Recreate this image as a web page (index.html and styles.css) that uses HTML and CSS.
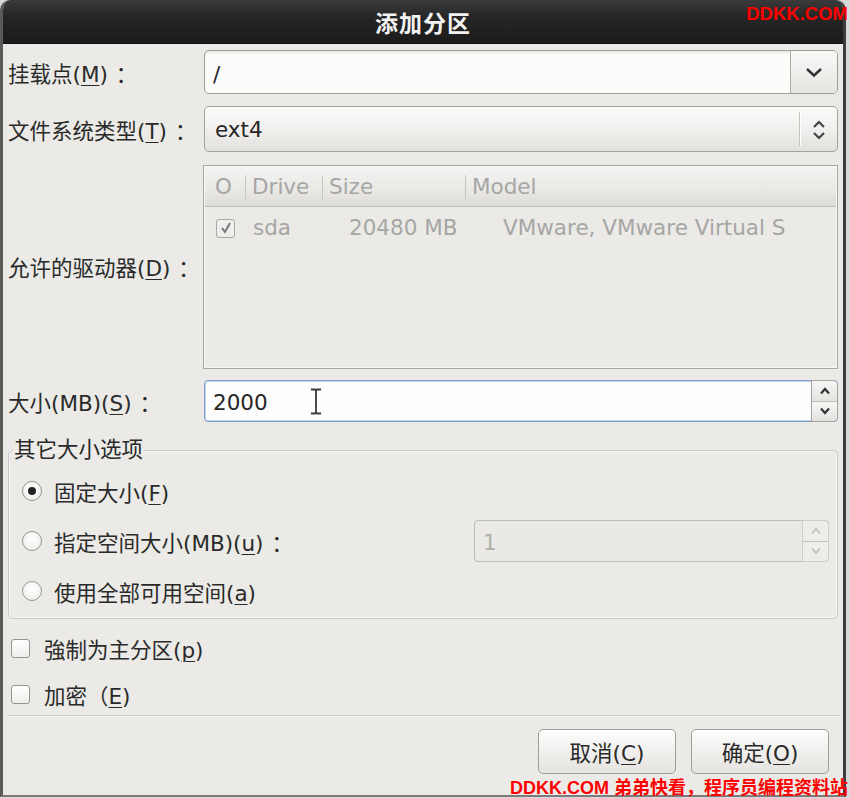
FILE: index.html
```html
<!DOCTYPE html>
<html lang="zh">
<head>
<meta charset="utf-8">
<title>添加分区</title>
<link rel="stylesheet" href="styles.css">
</head>
<body>
<div class="window">
  <div class="titlebar"><span class="title">添加分区</span></div>
  <div class="content">
    <div class="form">
      <label class="lbl">挂载点(<u>M</u>)<span class="colon">：</span></label>
      <div class="combo-entry">
        <span class="entry-text slash">/</span>
        <span class="combo-drop">
          <svg width="18" height="11" viewBox="0 0 18 11"><polyline points="2,2 9,8.5 16,2" fill="none" stroke="#333" stroke-width="2.4"/></svg>
        </span>
      </div>

      <label class="lbl">文件系统类型(<u>T</u>)<span class="colon">：</span></label>
      <div class="combo-button">
        <span class="entry-text">ext4</span>
        <span class="vsep"></span>
        <span class="updown">
          <svg width="14" height="22" viewBox="0 0 14 22"><polyline points="2,8 7,3 12,8" fill="none" stroke="#444" stroke-width="2.2"/><polyline points="2,14 7,19 12,14" fill="none" stroke="#444" stroke-width="2.2"/></svg>
        </span>
      </div>

      <label class="lbl">允许的驱动器(<u>D</u>)<span class="colon">：</span></label>
      <div class="tree">
        <div class="tree-head">
          <span class="hcell c0">O</span>
          <span class="hcell c1">Drive</span>
          <span class="hcell c2">Size</span>
          <span class="hcell c3">Model</span>
        </div>
        <div class="tree-row">
          <span class="rcell c0"><span class="tick-box">
            <svg width="12" height="12" viewBox="0 0 12 12"><polyline points="2,6 5,10 10,1" fill="none" stroke="#777" stroke-width="2"/></svg>
          </span></span>
          <span class="rcell c1">sda</span>
          <span class="rcell c2">20480 MB</span>
          <span class="rcell c3">VMware, VMware Virtual S</span>
        </div>
      </div>

      <label class="lbl">大小(MB)(<u>S</u>)<span class="colon">：</span></label>
      <div class="spin focused">
        <span class="entry-text">2000</span>
        <svg class="ibeam" width="12" height="27" viewBox="0 0 12 27"><path d="M1 1.5h4l1 1 1-1h4M6 2.5v22M1 25.5h4l1-1 1 1h4" fill="none" stroke="#fff" stroke-width="3.5"/><path d="M1 1.5h4l1 1 1-1h4M6 2.5v22M1 25.5h4l1-1 1 1h4" fill="none" stroke="#3a3a3a" stroke-width="1.8"/></svg>
        <span class="spin-btns">
          <span class="sb"><svg width="12" height="8" viewBox="0 0 12 8"><polyline points="2,6.5 6,2 10,6.5" fill="none" stroke="#333" stroke-width="2.2"/></svg></span>
          <span class="sb"><svg width="12" height="8" viewBox="0 0 12 8"><polyline points="2,1.5 6,6 10,1.5" fill="none" stroke="#333" stroke-width="2.2"/></svg></span>
        </span>
      </div>
    </div>

    <fieldset class="frame">
      <legend>其它大小选项</legend>
      <div class="opt"><span class="radio checked"></span><span>固定大小(<u>F</u>)</span></div>
      <div class="opt">
        <span class="radio"></span><span>指定空间大小(MB)(<u>u</u>)<span class="colon">：</span></span>
        <div class="spin disabled">
          <span class="entry-text">1</span>
          <span class="spin-btns">
            <span class="sb"><svg width="12" height="8" viewBox="0 0 12 8"><polyline points="2,6.5 6,2 10,6.5" fill="none" stroke="#bbb" stroke-width="1.6"/></svg></span>
            <span class="sb"><svg width="12" height="8" viewBox="0 0 12 8"><polyline points="2,1.5 6,6 10,1.5" fill="none" stroke="#bbb" stroke-width="1.6"/></svg></span>
          </span>
        </div>
      </div>
      <div class="opt"><span class="radio"></span><span>使用全部可用空间(<u>a</u>)</span></div>
    </fieldset>

    <div class="check-row"><span class="cbox"></span><span>強制为主分区(<u>p</u>)</span></div>
    <div class="check-row second"><span class="cbox"></span><span>加密（<u>E</u>)</span></div>

    <div class="hsep"></div>

    <div class="buttons">
      <button class="btn">取消(<u>C</u>)</button>
      <button class="btn">确定(<u>O</u>)</button>
    </div>
  </div>
</div>
<div class="wm wm-top">DDKK.COM</div>
<div class="wm wm-bottom">DDKK.COM 弟弟快看，程序员编程资料站</div>
</body>
</html>
```

FILE: styles.css
```css
html, body {
  margin: 0;
  padding: 0;
}
body {
  width: 850px;
  height: 798px;
  background: #d9d9d9;
  position: relative;
  overflow: hidden;
  font-family: "DejaVu Sans", "Noto Sans CJK SC", sans-serif;
  font-size: 21.5px;
  color: #2a2a2a;
}
u {
  text-decoration-thickness: 1px;
  text-underline-offset: 3px;
}
.colon {
  margin-left: 8px;
}

.window {
  width: 846px;
  height: 797px;
  box-sizing: border-box;
  background: #ebeae7;
  border-left: 3px solid #5a5a5a;
  border-right: 3px solid #3c3c3c;
  border-bottom: 2px solid #7a7a7a;
  border-radius: 10px 10px 0 0;
  overflow: hidden;
  display: flex;
  flex-direction: column;
}

.titlebar {
  height: 44px;
  flex: none;
  background: linear-gradient(#3a3a3a 0, #262626 40%, #1b1b1b 100%);
  border-bottom: 1px solid #111;
  box-sizing: border-box;
  display: flex;
  align-items: center;
  justify-content: center;
}
.title {
  color: #f2f2f2;
  font-weight: bold;
  font-size: 23px;
  letter-spacing: 1px;
  font-family: "Noto Sans CJK SC", sans-serif;
}

.content {
  padding: 6px 5px 0 5px;
  display: flex;
  flex-direction: column;
}

.form {
  display: grid;
  grid-template-columns: 196px 1fr;
  grid-template-rows: 44px 46px 204px 42px;
  row-gap: 12px;
  align-items: center;
}
.lbl {
  white-space: nowrap;
}

.entry-text {
  padding-left: 8px;
  color: #262626;
}

/* editable combo */
.combo-entry {
  height: 44px;
  box-sizing: border-box;
  border: 1px solid #9d9d9b;
  border-radius: 5px;
  background: #fcfcfb;
  box-shadow: inset 0 2px 2px rgba(0,0,0,0.08);
  display: flex;
  align-items: center;
  overflow: hidden;
}
.combo-entry .entry-text {
  flex: 1;
  padding-top: 4px;
}
.combo-drop {
  width: 46px;
  align-self: stretch;
  border-left: 1px solid #aaa9a6;
  background: linear-gradient(#f9f9f8, #e5e4e1);
  display: flex;
  align-items: center;
  justify-content: center;
}

/* non-editable combo */
.combo-button {
  height: 46px;
  box-sizing: border-box;
  border: 1px solid #a3a2a0;
  border-radius: 5px;
  background: linear-gradient(#fbfbfa, #f1f0ee 50%, #e2e1de);
  display: flex;
  align-items: center;
}
.combo-button .entry-text {
  flex: 1;
  padding-left: 10px;
}
.vsep {
  width: 1px;
  height: 34px;
  background: #c5c4c1;
  box-shadow: 1px 0 0 #fff;
}
.updown {
  width: 37px;
  display: flex;
  justify-content: center;
  padding-top: 2px;
}

/* tree view */
.tree {
  height: 204px;
  margin-left: -1px;
  margin-top: 2px;
  box-sizing: border-box;
  border: 1px solid #a8a7a4;
  background: #ebeae7;
  box-shadow: inset 0 0 0 1px #f6f6f5;
  display: flex;
  flex-direction: column;
  color: #a6a6a4;
}
.tree-head {
  height: 40px;
  flex: none;
  box-sizing: border-box;
  border-bottom: 1px solid #c3c2bf;
  background: linear-gradient(#f4f4f3, #e9e8e5 60%, #dddcd8);
  display: grid;
  grid-template-columns: 40px 77px 143px 1fr;
  align-items: center;
  margin: 1px 1px 0 1px;
}
.tree-row {
  height: 40px;
  display: grid;
  grid-template-columns: 40px 77px 143px 1fr;
  align-items: center;
  margin: 0 1px;
}
.hcell {
  height: 24px;
  line-height: 24px;
  padding-left: 6px;
}
.hcell.c0 {
  padding-left: 10px;
}
.hcell.c1, .hcell.c2, .hcell.c3 {
  border-left: 1px solid #c6c5c2;
}
.rcell.c0 {
  padding-left: 11px;
  display: flex;
}
.rcell.c1 {
  padding-left: 8px;
}
.rcell.c2 {
  padding-left: 27px;
}
.rcell.c3 {
  padding-left: 38px;
  white-space: nowrap;
  overflow: hidden;
}
.tick-box {
  width: 19px;
  height: 19px;
  box-sizing: border-box;
  border: 1px solid #a9a9a7;
  border-radius: 3px;
  background: #efeeec;
  display: flex;
  align-items: center;
  justify-content: center;
  margin-top: 2px;
}

/* spin buttons */
.spin {
  height: 42px;
  box-sizing: border-box;
  display: flex;
  align-items: center;
  position: relative;
  border-radius: 4px;
}
.spin .entry-text {
  flex: 1;
  padding-top: 2px;
}
.spin.focused {
  border: 1px solid #7e9cc9;
  box-shadow: inset 0 0 0 1px #c4d4ec;
  background: #fdfdfd;
}
.spin-btns {
  width: 25px;
  align-self: stretch;
  display: flex;
  flex-direction: column;
  margin: -1px -1px -1px 0;
  border: 1px solid #a4a3a0;
  border-radius: 0 5px 5px 0;
  overflow: hidden;
}
.sb {
  flex: 1;
  display: flex;
  align-items: center;
  justify-content: center;
  background: linear-gradient(#f7f7f6, #e3e2df);
}
.sb + .sb {
  border-top: 1px solid #c2c1be;
}
.ibeam {
  position: absolute;
  left: 105px;
  top: 7px;
}
.spin.disabled {
  width: 355px;
  margin-left: auto;
  border: 1px solid #bdbcb9;
  background: #eae9e6;
  color: #b0afad;
}
.spin.disabled .entry-text {
  color: #b0afac;
}
.spin.disabled .spin-btns {
  border-color: #cfceca;
}
.spin.disabled .sb {
  background: #eeedea;
}

/* frame */
.frame {
  margin: 16px 0 0 0;
  padding: 0 8px 2px 4px;
  border: 1px solid #c9c8c5;
  border-radius: 5px;
  box-shadow: inset 0 0 0 1px #f5f5f4;
  min-inline-size: 0;
}
.frame legend {
  padding: 0 1px;
  line-height: 24px;
  color: #2a2a2a;
}
.opt {
  height: 50px;
  display: flex;
  align-items: center;
  padding-left: 9px;
}
.opt:first-of-type {
  margin-top: 4px;
}
.radio {
  width: 20px;
  height: 20px;
  box-sizing: border-box;
  border: 1px solid #959491;
  border-radius: 50%;
  background: radial-gradient(circle at 50% 35%, #ffffff, #ecebe8);
  margin-right: 12px;
  display: flex;
  align-items: center;
  justify-content: center;
  flex: none;
}
.radio.checked::after {
  content: "";
  width: 8px;
  height: 8px;
  border-radius: 50%;
  background: #222;
}

/* check rows */
.check-row {
  height: 36px;
  display: flex;
  align-items: center;
  margin-top: 11px;
  padding-left: 3px;
}
.check-row.second {
  margin-top: 10px;
}
.cbox {
  width: 19px;
  height: 19px;
  box-sizing: border-box;
  border: 1px solid #959491;
  border-radius: 3px;
  background: linear-gradient(#ffffff, #efeeec);
  margin-right: 14px;
  flex: none;
}

.hsep {
  height: 1px;
  background: #cbcac7;
  box-shadow: 0 1px 0 #f8f8f7;
  margin: 3px -2px 0 -1px;
}

.buttons {
  display: flex;
  justify-content: flex-end;
  gap: 15px;
  margin-top: 13px;
  padding-right: 9px;
}
.btn {
  width: 138px;
  height: 45px;
  border: 1px solid #9e9d9a;
  border-radius: 5px;
  background: linear-gradient(#fdfdfd, #f1f0ee 50%, #e4e3e0);
  box-shadow: inset 0 1px 0 #fff;
  font-family: "DejaVu Sans", "Noto Sans CJK SC", sans-serif;
  font-size: 21.5px;
  color: #2a2a2a;
  padding: 0;
}

/* watermarks */
.wm {
  position: absolute;
  color: #ff0000;
  font-weight: bold;
  font-family: "Liberation Sans", "Noto Sans CJK SC", sans-serif;
  white-space: nowrap;
  line-height: 1;
}
.wm-top {
  right: 2px;
  top: 5px;
  font-size: 18.5px;
}
.wm-bottom {
  right: 2px;
  bottom: 1px;
  font-size: 18px;
}
```
